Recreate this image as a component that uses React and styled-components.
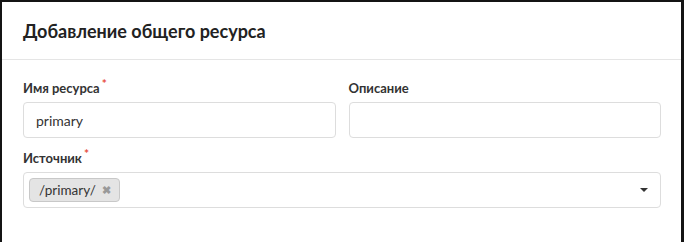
import React from "react";
import styled, { createGlobalStyle } from "styled-components";

const GlobalStyle = createGlobalStyle`
  html, body {
    margin: 0;
    padding: 0;
    background: #141414;
  }
  body {
    font-family: Lato, "Open Sans", sans-serif;
    color: #333;
  }
`;

const Frame = styled.div`
  height: 242px;
  padding: 2px 3px 0 2px;
  box-sizing: border-box;
`;

const Modal = styled.div`
  background: #fff;
  height: 100%;
`;

const Header = styled.div`
  padding: 16px 21px 15px;
  border-bottom: 1px solid #e5e5e5;
`;

const Title = styled.h4`
  margin: 0;
  font-size: 18px;
  line-height: 26px;
  font-weight: 700;
  color: #222;
`;

const Body = styled.div`
  padding: 20px 20px 0 21px;
`;

const Row = styled.div`
  display: grid;
  grid-template-columns: ${({ cols }) => cols || "1fr"};
  column-gap: 13px;
  margin-bottom: 12px;
`;

const Field = styled.div`
  display: flex;
  flex-direction: column;
`;

const Label = styled.label`
  font-size: 13px;
  font-weight: 700;
  line-height: 17px;
  margin-bottom: 5px;
  color: #333;
`;

const Required = styled.sup`
  color: #e74c3c;
  font-size: 12px;
  margin-left: 2px;
  line-height: 0;
`;

const Input = styled.div`
  height: 36px;
  box-sizing: border-box;
  border: 1px solid #ddd;
  border-radius: 4px;
  padding: 0 12px;
  display: flex;
  align-items: center;
  font-size: 14px;
  color: #333;
`;

const Select = styled.div`
  height: 36px;
  box-sizing: border-box;
  border: 1px solid #ddd;
  border-radius: 4px;
  padding: 0 12px 0 5px;
  display: flex;
  align-items: center;
`;

const Tag = styled.span`
  display: inline-flex;
  align-items: center;
  height: 24px;
  box-sizing: border-box;
  background: #e4e4e4;
  border: 1px solid #c8c8c8;
  border-radius: 4px;
  padding: 0 8px 0 9px;
  font-size: 13.5px;
  color: #333;
`;

const Remove = styled.span`
  margin-left: 6px;
  color: #999;
  font-size: 11px;
  font-weight: 700;
`;

const Caret = styled.span`
  margin-left: auto;
  width: 0;
  height: 0;
  border-left: 4px solid transparent;
  border-right: 4px solid transparent;
  border-top: 4px solid #333;
`;

export default function App() {
  return (
    <>
      <GlobalStyle />
      <Frame>
        <Modal>
          <Header>
            <Title>Добавление общего ресурса</Title>
          </Header>
          <Body>
            <Row cols="1fr 1fr">
              <Field>
                <Label>
                  Имя ресурса<Required>*</Required>
                </Label>
                <Input>primary</Input>
              </Field>
              <Field>
                <Label>Описание</Label>
                <Input />
              </Field>
            </Row>
            <Row>
              <Field>
                <Label>
                  Источник<Required>*</Required>
                </Label>
                <Select>
                  <Tag>
                    /primary/<Remove>✖</Remove>
                  </Tag>
                  <Caret />
                </Select>
              </Field>
            </Row>
          </Body>
        </Modal>
      </Frame>
    </>
  );
}
